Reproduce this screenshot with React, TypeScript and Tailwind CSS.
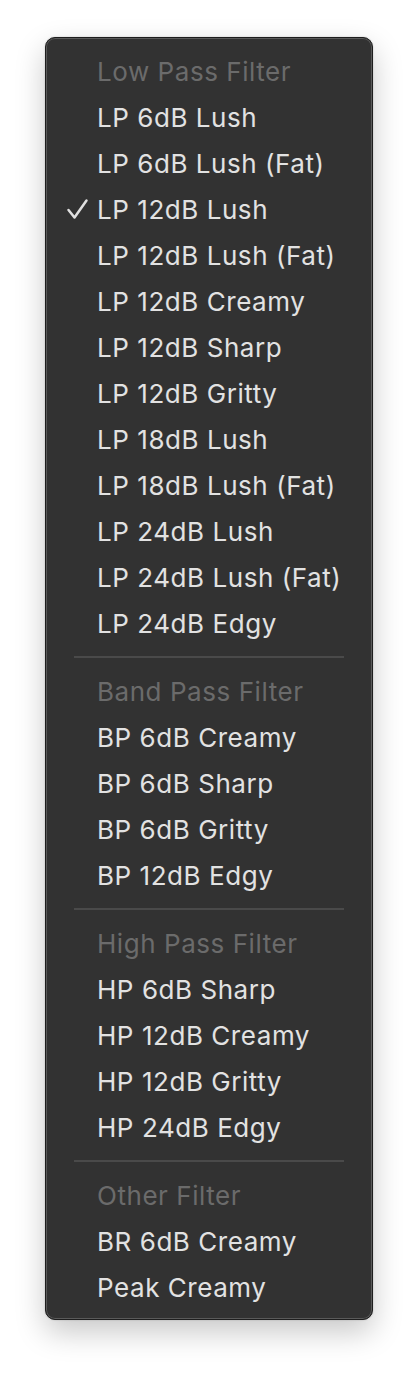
import React from "react";

type Section = { title: string; items: string[] };

const sections: Section[] = [
  {
    title: "Low Pass Filter",
    items: [
      "LP 6dB Lush",
      "LP 6dB Lush (Fat)",
      "LP 12dB Lush",
      "LP 12dB Lush (Fat)",
      "LP 12dB Creamy",
      "LP 12dB Sharp",
      "LP 12dB Gritty",
      "LP 18dB Lush",
      "LP 18dB Lush (Fat)",
      "LP 24dB Lush",
      "LP 24dB Lush (Fat)",
      "LP 24dB Edgy",
    ],
  },
  {
    title: "Band Pass Filter",
    items: ["BP 6dB Creamy", "BP 6dB Sharp", "BP 6dB Gritty", "BP 12dB Edgy"],
  },
  {
    title: "High Pass Filter",
    items: ["HP 6dB Sharp", "HP 12dB Creamy", "HP 12dB Gritty", "HP 24dB Edgy"],
  },
  {
    title: "Other Filter",
    items: ["BR 6dB Creamy", "Peak Creamy"],
  },
];

const selected = "LP 12dB Lush";

function Check() {
  return (
    <svg width="24" height="22" viewBox="0 0 24 22" className="absolute left-[20px] top-1/2 -translate-y-1/2">
      <path d="M2.5 12 L8.5 19.5 L20.5 2.5" fill="none" stroke="#e0e0e0" strokeWidth="2.5" strokeLinecap="round" strokeLinejoin="round" />
    </svg>
  );
}

export default function App() {
  return (
    <div
      className="w-[418px] h-[1374px] bg-white pl-[45px] pt-[37px]"
      style={{ fontFamily: "Inter, 'Noto Sans', sans-serif" }}
    >
      <div className="w-[328px] rounded-[10px] bg-[#323232] border border-[#1e1e1e] shadow-[0_12px_30px_rgba(0,0,0,0.22),0_0_2px_rgba(0,0,0,0.2),inset_0_0_0_1px_#5a5a5a] pt-[10px] pb-[9px]">
        {sections.map((s, si) => (
          <div key={s.title}>
            {si > 0 && (
              <div className="h-[22px] flex items-center px-[28px]">
                <div className="h-[2px] w-full bg-[#4a4a4a]" />
              </div>
            )}
            <div className="h-[46px] flex items-center pl-[51px] text-[26px] text-[#6b6b6b] tracking-[0.55px]">
              {s.title}
            </div>
            {s.items.map((it) => (
              <div
                key={it}
                className="relative h-[46px] flex items-center pl-[51px] text-[26px] text-[#e2e2e2] tracking-[0.55px]"
              >
                {it === selected && <Check />}
                {it}
              </div>
            ))}
          </div>
        ))}
      </div>
    </div>
  );
}
